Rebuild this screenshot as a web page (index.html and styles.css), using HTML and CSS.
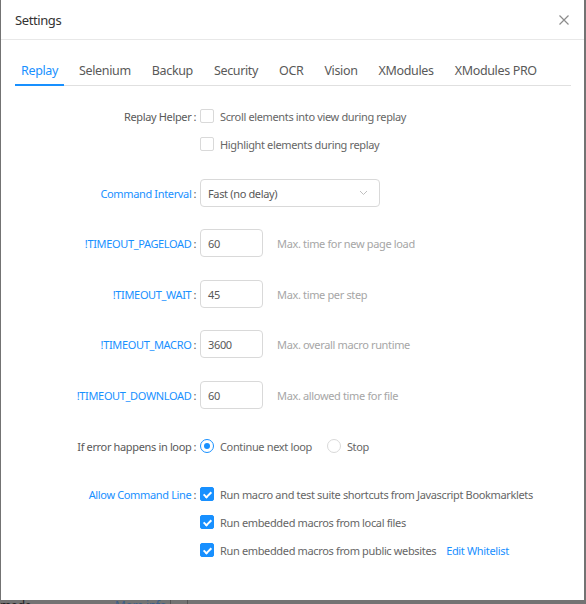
FILE: index.html
```html
<!DOCTYPE html>
<html>
<head>
<meta charset="utf-8">
<link rel="stylesheet" href="styles.css">
</head>
<body>
<div class="dialog">
  <div class="header">
    <span class="title">Settings</span>
    <svg class="close" width="12" height="12" viewBox="0 0 12 12"><path d="M1.5 1.5 L10.5 10.5 M10.5 1.5 L1.5 10.5" stroke="#8c8c8c" stroke-width="1.2" fill="none"/></svg>
  </div>
  <div class="tabs">
    <span class="tab active">Replay</span>
    <span class="tab">Selenium</span>
    <span class="tab">Backup</span>
    <span class="tab">Security</span>
    <span class="tab">OCR</span>
    <span class="tab">Vision</span>
    <span class="tab">XModules</span>
    <span class="tab">XModules PRO</span>
  </div>
  <div class="form">
    <div class="row first">
      <div class="label">Replay Helper<span class="colon">:</span></div>
      <div class="ctrl"><span class="cb"></span><span class="text">Scroll elements into view during replay</span></div>
    </div>
    <div class="row">
      <div class="label"></div>
      <div class="ctrl"><span class="cb"></span><span class="text">Highlight elements during replay</span></div>
    </div>
    <div class="row sel-row">
      <div class="label blue">Command Interval<span class="colon">:</span></div>
      <div class="ctrl"><div class="select"><span>Fast (no delay)</span><svg width="9" height="6" viewBox="0 0 9 6"><path d="M1 1 L4.5 4.5 L8 1" stroke="#bfbfbf" stroke-width="1" fill="none"/></svg></div></div>
    </div>
    <div class="row gap22">
      <div class="label blue">!TIMEOUT_PAGELOAD<span class="colon">:</span></div>
      <div class="ctrl"><div class="input">60</div><span class="hint">Max. time for new page load</span></div>
    </div>
    <div class="row gap23">
      <div class="label blue">!TIMEOUT_WAIT<span class="colon">:</span></div>
      <div class="ctrl"><div class="input">45</div><span class="hint">Max. time per step</span></div>
    </div>
    <div class="row gap22">
      <div class="label blue">!TIMEOUT_MACRO<span class="colon">:</span></div>
      <div class="ctrl"><div class="input">3600</div><span class="hint">Max. overall macro runtime</span></div>
    </div>
    <div class="row gap23">
      <div class="label blue">!TIMEOUT_DOWNLOAD<span class="colon">:</span></div>
      <div class="ctrl"><div class="input">60</div><span class="hint">Max. allowed time for file</span></div>
    </div>
    <div class="row gap23">
      <div class="label">If error happens in loop<span class="colon">:</span></div>
      <div class="ctrl"><span class="radio on"></span><span class="text">Continue next loop</span><span class="radio second"></span><span class="text">Stop</span></div>
    </div>
    <div class="row gap20">
      <div class="label blue">Allow Command Line<span class="colon">:</span></div>
      <div class="ctrl"><span class="cb on"></span><span class="text">Run macro and test suite shortcuts from Javascript Bookmarklets</span></div>
    </div>
    <div class="row">
      <div class="label"></div>
      <div class="ctrl"><span class="cb on"></span><span class="text">Run embedded macros from local files</span></div>
    </div>
    <div class="row">
      <div class="label"></div>
      <div class="ctrl"><span class="cb on"></span><span class="text">Run embedded macros from public websites</span><a class="link">Edit Whitelist</a></div>
    </div>
  </div>
</div>
<div class="behind">
  <span class="behind-mode">mode</span>
  <span class="behind-info">More info</span>
  <span class="behind-sep"></span>
  <span class="behind-sep"></span>
</div>
</body>
</html>
```
FILE: styles.css
```css
html, body {
  margin: 0;
  padding: 0;
}
body {
  background: #737373;
  width: 586px;
  height: 604px;
  overflow: hidden;
  padding-left: 1px;
  box-sizing: border-box;
  font-family: "Noto Sans", "Open Sans", sans-serif;
  font-size: 11px;
  letter-spacing: -0.35px;
  color: #666;
}
.dialog {
  width: 583px;
  height: 600px;
  background: #fff;
  overflow: hidden;
}
.header {
  height: 40px;
  border-bottom: 1px solid #e8e8e8;
  display: flex;
  align-items: center;
  justify-content: space-between;
  padding: 0 14px 0 14px;
  box-sizing: border-box;
}
.title {
  font-size: 13px;
  letter-spacing: -0.4px;
  color: #333;
}
.close {
  display: block;
}
.tabs {
  margin: 16px 13px 0 14px;
  height: 29px;
  border-bottom: 1px solid #e0e0e0;
  display: flex;
  gap: 9px;
  white-space: nowrap;
}
.tab {
  padding: 0 6px;
  font-size: 12.5px;
  letter-spacing: -0.35px;
  color: #595959;
  line-height: 29px;
  height: 29px;
  box-sizing: border-box;
}
.tab.active {
  color: #1890ff;
  border-bottom: 2px solid #1890ff;
  height: 30px;
}
.form {
  padding-top: 16px;
}
.row {
  display: flex;
  align-items: center;
  height: 28px;
}
.sel-row { margin-top: 21px; }
.gap22 { margin-top: 22px; }
.gap23 { margin-top: 23px; }
.gap20 { margin-top: 20px; }
.label {
  width: 199px;
  flex: none;
  text-align: right;
  color: #595959;
  box-sizing: border-box;
  padding-right: 4px;
  white-space: nowrap;
}
.label.blue { color: #1890ff; }
.colon {
  color: #595959;
  margin-left: 2px;
}
.ctrl {
  display: flex;
  align-items: center;
  white-space: nowrap;
}
.cb {
  width: 14px;
  height: 14px;
  border: 1px solid #d9d9d9;
  border-radius: 2px;
  box-sizing: border-box;
  flex: none;
  position: relative;
}
.cb.on {
  background: #1890ff;
  border-color: #1890ff;
}
.cb.on::after {
  content: "";
  position: absolute;
  left: 4px;
  top: 1.5px;
  width: 3px;
  height: 6px;
  border: solid #fff;
  border-width: 0 2px 2px 0;
  transform: rotate(45deg);
}
.text {
  margin-left: 6px;
  color: #666;
}
.radio {
  width: 14px;
  height: 14px;
  border: 1px solid #d9d9d9;
  border-radius: 50%;
  box-sizing: border-box;
  flex: none;
  position: relative;
}
.radio.on { border-color: #1890ff; }
.radio.on::after {
  content: "";
  position: absolute;
  left: 3px;
  top: 3px;
  width: 6px;
  height: 6px;
  border-radius: 50%;
  background: #1890ff;
}
.radio.second { margin-left: 15px; }
.select {
  width: 180px;
  height: 28px;
  border: 1px solid #d9d9d9;
  border-radius: 4px;
  box-sizing: border-box;
  display: flex;
  align-items: center;
  justify-content: space-between;
  padding: 0 11px 0 7px;
  color: #595959;
}
.select svg { display: block; }
.input {
  width: 63px;
  height: 28px;
  border: 1px solid #d9d9d9;
  border-radius: 4px;
  box-sizing: border-box;
  display: flex;
  align-items: center;
  padding-left: 7px;
  color: #595959;
}
.hint {
  margin-left: 14px;
  color: #a6a6a6;
}
.link {
  margin-left: 10px;
  color: #1890ff;
}
.behind {
  display: flex;
  align-items: flex-start;
  height: 4px;
  overflow: hidden;
  margin-left: -1px;
  font-size: 12px;
  line-height: 12px;
}
.behind-mode {
  width: 115px;
  color: #222;
}
.behind-info {
  width: 55px;
  color: #3d5f88;
}
.behind-sep {
  width: 1px;
  height: 4px;
  background: #555;
  margin-right: 16px;
}
```
